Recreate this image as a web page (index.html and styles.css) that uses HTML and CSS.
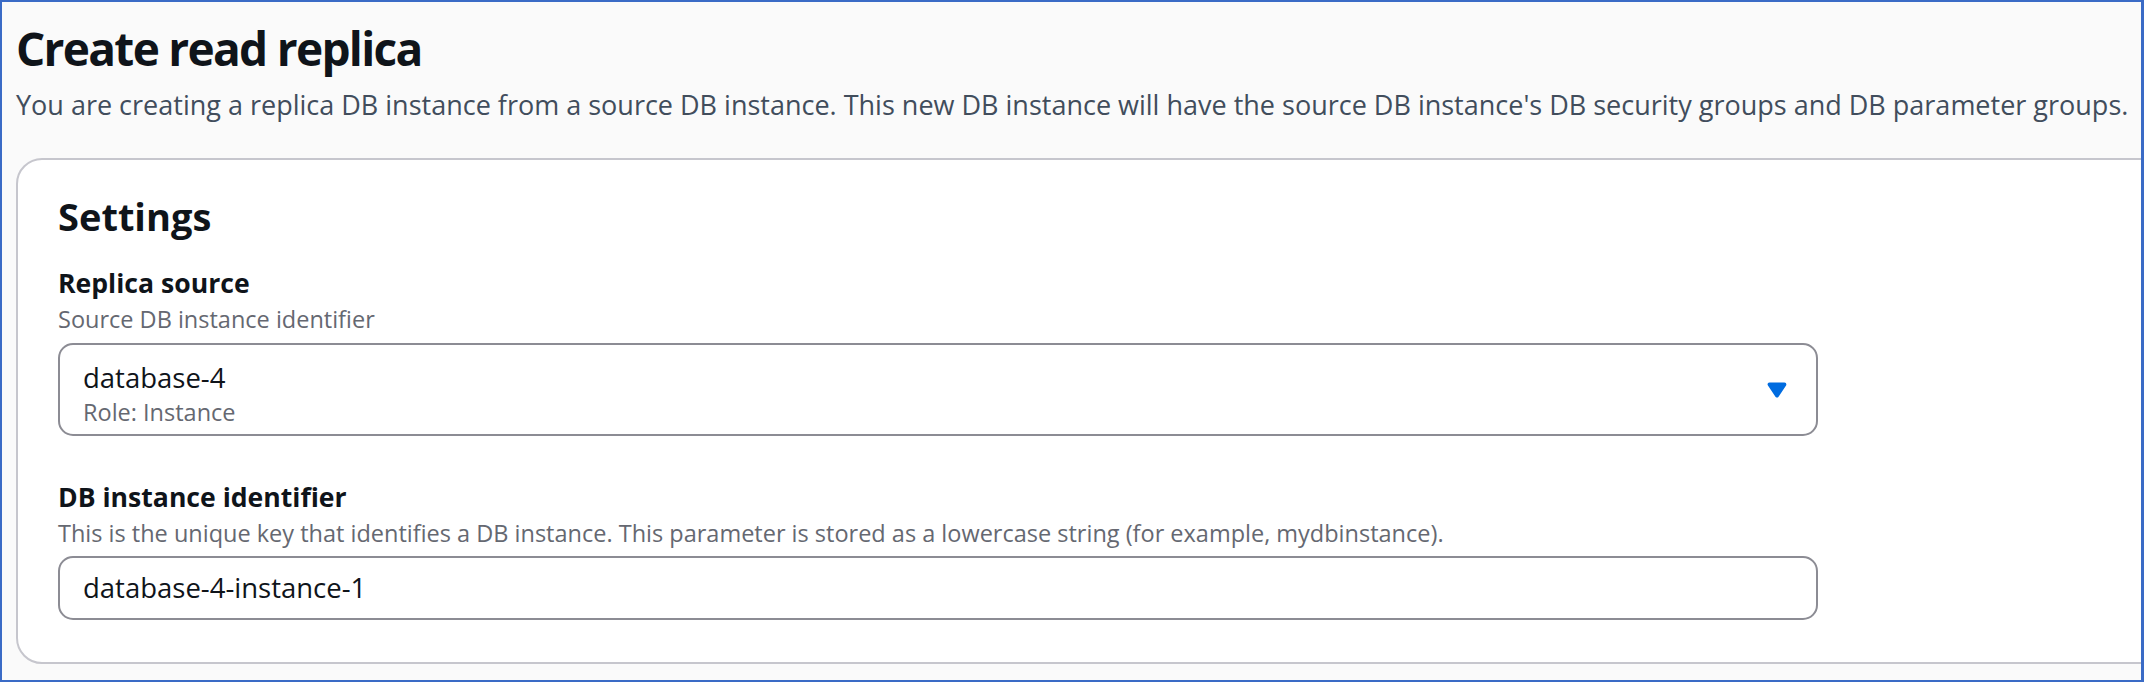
FILE: index.html
```html
<!DOCTYPE html>
<html lang="en">
<head>
<meta charset="utf-8">
<title>Create read replica</title>
<link rel="stylesheet" href="styles.css">
</head>
<body>
<div class="frame">
  <div class="page">
    <h1 class="page-title">Create read replica</h1>
    <p class="page-desc">You are creating a replica DB instance from a source DB instance. This new DB instance will have the source DB instance's DB security groups and DB parameter groups.</p>
    <section class="card">
      <h2 class="card-title">Settings</h2>
      <div class="field">
        <div class="field-label">Replica source</div>
        <div class="field-desc">Source DB instance identifier</div>
        <div class="select">
          <div class="select-text">
            <div class="select-value">database-4</div>
            <div class="select-sub">Role: Instance</div>
          </div>
          <svg class="caret" viewBox="0 0 16 16" width="30" height="30" aria-hidden="true">
            <path d="M4 5h8l-4 6-4-6z" fill="#006ce0" stroke="#006ce0" stroke-width="2" stroke-linejoin="round"/>
          </svg>
        </div>
      </div>
      <div class="field field-second">
        <div class="field-label">DB instance identifier</div>
        <div class="field-desc">This is the unique key that identifies a DB instance. This parameter is stored as a lowercase string (for example, mydbinstance).</div>
        <div class="input">database-4-instance-1</div>
      </div>
    </section>
  </div>
</div>
</body>
</html>
```
FILE: styles.css
```css
html, body {
  margin: 0;
  padding: 0;
  background: #fafafa;
}

.frame {
  width: 2144px;
  height: 682px;
  box-sizing: border-box;
  border: 2px solid #3a6bc6;
  border-right-width: 3px;
  background: #fafafa;
  overflow: hidden;
  font-family: "Open Sans", "Noto Sans", sans-serif;
  color: #0f141a;
}

.page {
  padding: 18px 0 0 14px;
}

.page-title {
  margin: 0;
  font-size: 46px;
  line-height: 57px;
  font-weight: 700;
  letter-spacing: -1.7px;
  color: #0f141a;
}

.page-desc {
  margin: 9px 0 0 0;
  font-size: 27px;
  line-height: 38px;
  color: #414d5c;
  white-space: nowrap;
}

.card {
  margin-top: 34px;
  width: 2300px;
  box-sizing: border-box;
  background: #ffffff;
  border: 2px solid #c6c6cd;
  border-radius: 26px;
  padding: 32px 0 42px 40px;
}

.card-title {
  margin: 0;
  font-size: 38px;
  line-height: 48px;
  font-weight: 700;
  color: #0f141a;
}

.field {
  margin-top: 24px;
  width: 1760px;
}

.field-second {
  margin-top: 42px;
}

.field-label {
  font-size: 26.6px;
  line-height: 38px;
  font-weight: 700;
  color: #0f141a;
}

.field-desc {
  margin-top: 2px;
  font-size: 23.5px;
  line-height: 30px;
  color: #656871;
  white-space: nowrap;
}

.select {
  margin-top: 9px;
  height: 93px;
  box-sizing: border-box;
  border: 2px solid #8c8c94;
  border-radius: 15px;
  background: #ffffff;
  display: flex;
  align-items: center;
  justify-content: space-between;
  padding: 0 24px 0 23px;
}

.select-text {
  display: flex;
  flex-direction: column;
  margin-top: 6px;
}

.select-value {
  font-size: 27.5px;
  line-height: 38px;
  color: #0f141a;
}

.select-sub {
  font-size: 23.5px;
  line-height: 30px;
  color: #656871;
}

.caret {
  display: block;
  flex: none;
}

.input {
  margin-top: 8px;
  height: 64px;
  box-sizing: border-box;
  border: 2px solid #8c8c94;
  border-radius: 15px;
  background: #ffffff;
  padding: 0 23px;
  display: flex;
  align-items: center;
  font-size: 27.5px;
  line-height: 38px;
  color: #0f141a;
}
```
